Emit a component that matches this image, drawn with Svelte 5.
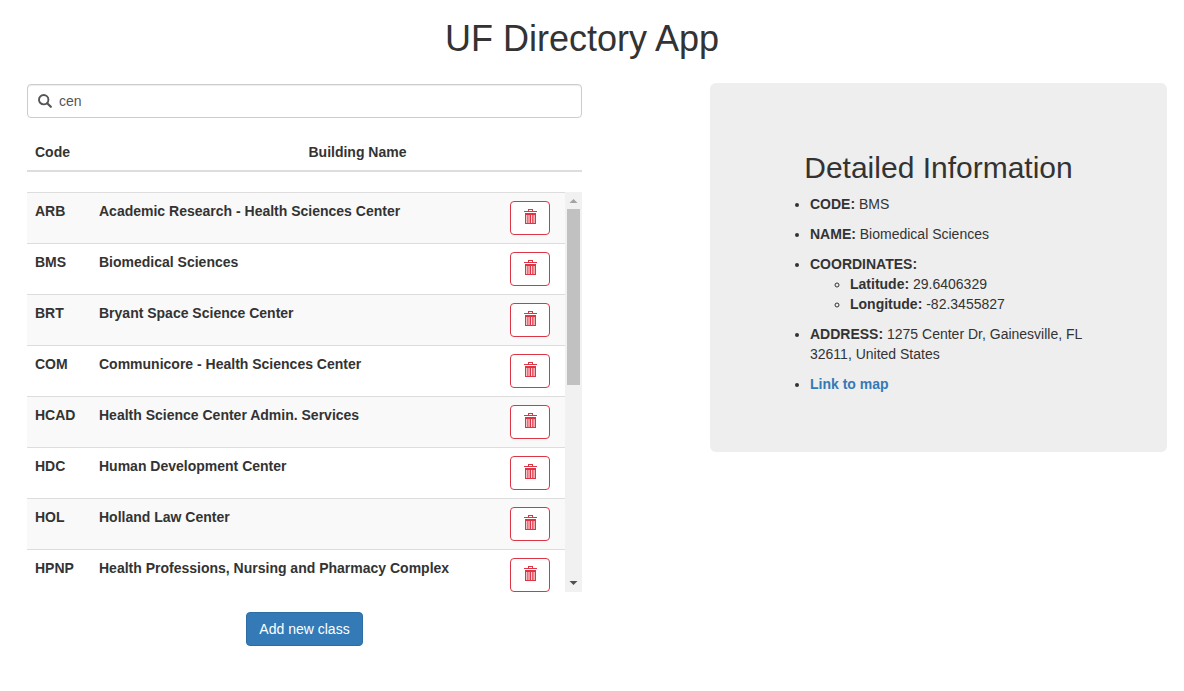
<script>
  let query = $state('cen');

  const buildings = [
    { code: 'ARB', name: 'Academic Research - Health Sciences Center' },
    { code: 'BMS', name: 'Biomedical Sciences' },
    { code: 'BRT', name: 'Bryant Space Science Center' },
    { code: 'COM', name: 'Communicore - Health Sciences Center' },
    { code: 'HCAD', name: 'Health Science Center Admin. Services' },
    { code: 'HDC', name: 'Human Development Center' },
    { code: 'HOL', name: 'Holland Law Center' },
    { code: 'HPNP', name: 'Health Professions, Nursing and Pharmacy Complex' }
  ];
</script>

<main class="page">
  <h1>UF Directory App</h1>

  <div class="columns">
    <section class="directory">
      <label class="search">
        <svg viewBox="0 0 14 14" width="14" height="14" aria-hidden="true">
          <circle cx="5.7" cy="5.7" r="4.7" fill="none" stroke="#555" stroke-width="1.9" />
          <path d="M9.2 9.2 L12.8 12.8" fill="none" stroke="#555" stroke-width="2.2" stroke-linecap="round" />
        </svg>
        <input type="text" aria-label="Search" bind:value={query} />
      </label>

      <table class="head">
        <thead>
          <tr><th class="head-code">Code</th><th class="head-name">Building Name</th></tr>
        </thead>
      </table>

      <div class="list">
        <div class="rows">
          <table>
            <tbody>
              {#each buildings as b (b.code)}
                <tr>
                  <td class="code">{b.code}</td>
                  <td>{b.name}</td>
                  <td class="action">
                    <button class="delete" type="button" aria-label="Delete">
                      <svg viewBox="0 0 14 16" width="14" height="16" aria-hidden="true" fill="#dc3545">
                        <path d="M5 0h5v2h4v1H1V2h4zM6 1v1h3V1z" fill-rule="evenodd" />
                        <path d="M2 4h11v11H2zM3.3 6v8h1V6zM5.5 6v8h1V6zM8.2 6v8h1V6zM10.6 6v8h1V6z" fill-rule="evenodd" />
                      </svg>
                    </button>
                  </td>
                </tr>
              {/each}
            </tbody>
          </table>
        </div>
        <div class="scrollbar" aria-hidden="true">
          <svg viewBox="0 0 17 17" width="17" height="17"><path d="M4.5 11 8.5 7l4 4z" fill="#a3a3a3" /></svg>
          <div class="track"><div class="thumb"></div></div>
          <svg viewBox="0 0 17 17" width="17" height="17"><path d="M4.5 6h8l-4 4z" fill="#505050" /></svg>
        </div>
      </div>

      <button class="add" type="button">Add new class</button>
    </section>

    <section class="details">
      <h2>Detailed Information</h2>
      <ul>
        <li><b>CODE:</b> BMS</li>
        <li><b>NAME:</b> Biomedical Sciences</li>
        <li>
          <b>COORDINATES:</b>
          <ul>
            <li><b>Latitude:</b> 29.6406329</li>
            <li><b>Longitude:</b> -82.3455827</li>
          </ul>
        </li>
        <li><b>ADDRESS:</b> 1275 Center Dr, Gainesville, FL 32611, United States</li>
        <li><a href="#map">Link to map</a></li>
      </ul>
    </section>
  </div>
</main>

<style>
  :global(body) {
    margin: 0;
    background: #fff;
  }
  .page, .page * {
    box-sizing: border-box;
  }
  .page {
    padding: 19px 17px 45px 27px;
    font-family: "Liberation Sans", Arial, sans-serif;
    font-size: 14px;
    line-height: 20px;
    color: #333;
  }
  h1, h2 {
    margin: 0;
    font-weight: normal;
    text-align: center;
  }
  h1 {
    padding-right: 30px;
    font-size: 36px;
    line-height: 40px;
  }
  h2 {
    margin: 20px 0 10px;
    font-size: 30px;
    line-height: 33px;
  }
  .columns {
    display: grid;
    grid-template-columns: 555fr 457fr;
    column-gap: 128px;
    align-items: start;
    padding-top: 24px;
  }
  .directory {
    display: flex;
    flex-direction: column;
    padding-top: 1px;
  }
  .search {
    display: flex;
    align-items: center;
    gap: 7px;
    height: 34px;
    padding: 0 10px;
    border: 1px solid #ccc;
    border-radius: 4px;
    box-shadow: inset 0 1px 1px rgba(0, 0, 0, 0.075);
  }
  .search input {
    flex: 1;
    min-width: 0;
    padding: 0;
    border: 0;
    outline: 0;
    background: transparent;
    font: inherit;
    color: #555;
  }
  table {
    width: 100%;
    border-collapse: separate;
    border-spacing: 0;
  }
  .head {
    margin: 16px 0 20px;
  }
  th {
    padding: 8px;
    border-bottom: 2px solid #ddd;
  }
  .head-code {
    width: 106px;
    text-align: left;
  }
  .head-name {
    text-align: center;
  }
  .list {
    display: flex;
    height: 400px;
  }
  .rows {
    flex: 1;
    overflow: hidden;
  }
  td {
    padding: 8px;
    border-top: 1px solid #ddd;
    vertical-align: top;
    font-weight: bold;
  }
  tr:nth-child(odd) td {
    background: #f9f9f9;
  }
  .code {
    width: 64px;
  }
  .action {
    width: 63px;
    padding-right: 15px;
  }
  .delete {
    display: flex;
    align-items: flex-start;
    justify-content: center;
    width: 40px;
    height: 34px;
    padding: 7px 0 0;
    border: 1px solid #dc3545;
    border-radius: 4px;
    background: #fff;
  }
  .scrollbar {
    display: flex;
    flex-direction: column;
    width: 17px;
    background: #f1f1f1;
  }
  .track {
    flex: 1;
    padding: 0 2px;
  }
  .thumb {
    height: 48%;
    background: #c1c1c1;
  }
  .add {
    align-self: center;
    height: 34px;
    margin-top: 20px;
    padding: 6px 12px;
    border: 1px solid #2e6da4;
    border-radius: 4px;
    background: #337ab7;
    font: inherit;
    color: #fff;
  }
  .details {
    padding: 48px 60px;
    border-radius: 6px;
    background: #eee;
  }
  .details::before {
    content: "";
    display: table;
  }
  ul {
    margin: 0;
    padding-left: 40px;
  }
  .details > ul > li {
    margin-bottom: 10px;
  }
  a {
    font-weight: bold;
    color: #337ab7;
    text-decoration: none;
  }
</style>
